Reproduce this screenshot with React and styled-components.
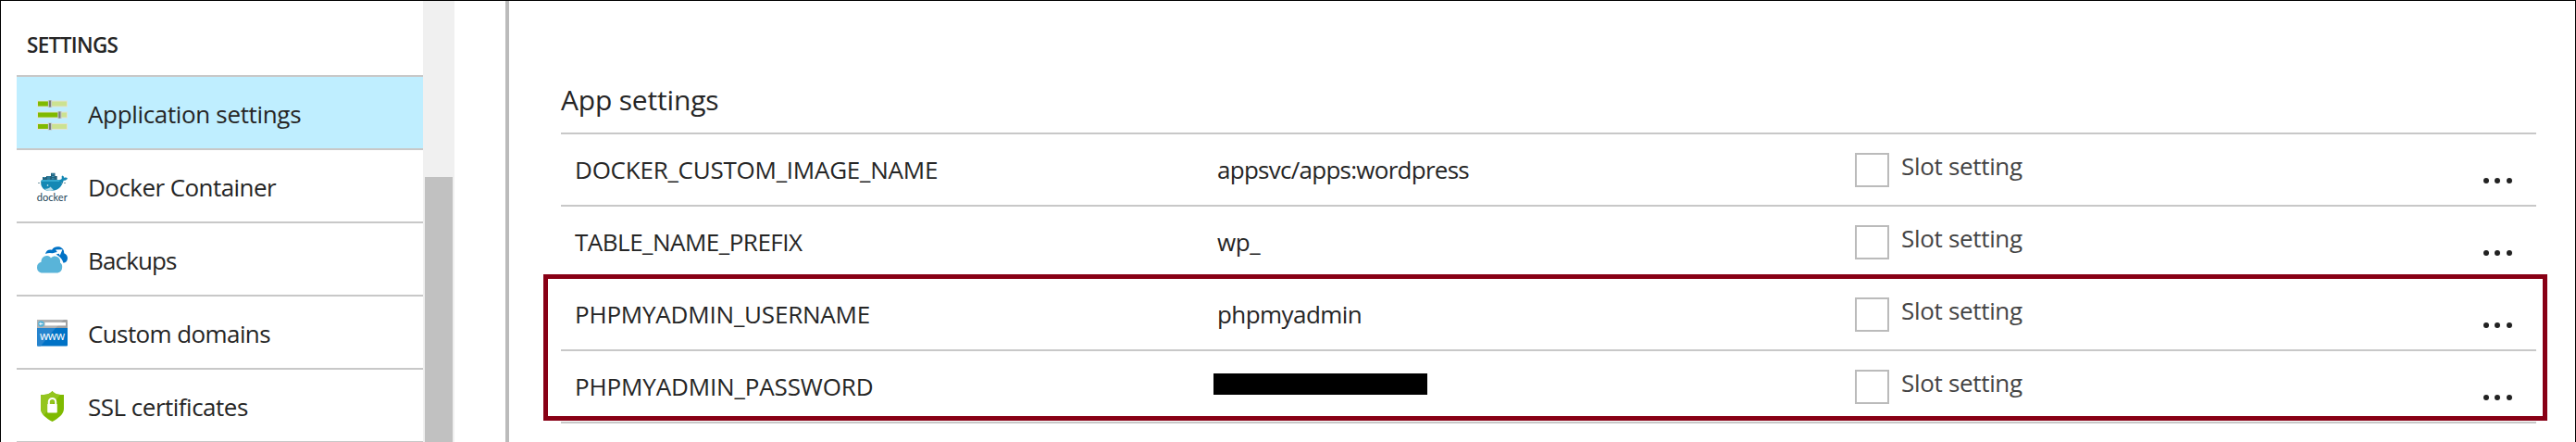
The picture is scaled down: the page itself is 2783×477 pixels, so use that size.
import React from "react";
import styled, { createGlobalStyle } from "styled-components";

const GlobalStyle = createGlobalStyle`
  *, *::before, *::after { box-sizing: border-box; }
  body {
    margin: 0;
    background: #fff;
    color: #252525;
    font-family: "Open Sans", "Noto Sans", sans-serif;
    font-size: 26px;
    overflow: hidden;
  }
`;

const Frame = styled.div`
  position: relative;
  display: flex;
  width: 2783px;
  height: 477px;
  overflow: hidden;
  border: 1px solid #000;
  border-bottom: 0;
`;

const Sidebar = styled.nav`
  width: 456px;
  padding-left: 17px;
  flex: none;
`;

const SidebarHeading = styled.h2`
  margin: 0;
  height: 82px;
  padding: 32px 0 0 11px;
  border-bottom: 2px solid #c8c8c8;
  font-size: 22.5px;
  font-weight: 600;
  line-height: 32px;
  letter-spacing: -0.65px;
`;

const MenuItem = styled.div`
  display: flex;
  height: 79px;
  padding-left: 22px;
  border-bottom: 2px solid #c8c8c8;
  background: ${(p) => (p.$active ? "#bfeeff" : "transparent")};
`;

const MenuIcon = styled.svg`
  flex: none;
  width: 33px;
  height: 35px;
  margin-top: 24px;
  overflow: visible;
`;

const MenuLabel = styled.span`
  margin: 3px 0 0 22px;
  line-height: 74px;
  white-space: nowrap;
  letter-spacing: ${(p) => p.$spacing}px;
`;

const ScrollTrack = styled.div`
  flex: none;
  width: 34px;
  height: 476px;
  padding: 190px 2px 0;
  background: #f0f0f0;
`;

const ScrollThumb = styled.div`
  height: 286px;
  background: #c1c1c1;
`;

const Blade = styled.main`
  flex: none;
  width: 2194px;
  margin-left: 55px;
  padding: 86px 0 0 56px;
  border-left: 4px solid #bbb;
`;

const SectionTitle = styled.h1`
  margin: 0;
  height: 58px;
  border-bottom: 2px solid #c8c8c8;
  font-size: 30px;
  font-weight: 400;
  line-height: 42px;
  letter-spacing: -0.18px;
`;

const SettingRow = styled.div`
  display: grid;
  grid-template-columns: 694px 687px 1fr 72px;
  height: 78px;
  padding-left: 15px;
  border-bottom: 2px solid #c8c8c8;
`;

const Cell = styled.div`
  line-height: 76px;
  white-space: nowrap;
  letter-spacing: ${(p) => p.$spacing}px;
`;

const Redacted = styled.div`
  width: 231px;
  height: 23px;
  margin: 24px 0 0 -4px;
  background: #000;
`;

const SlotSetting = styled.label`
  display: flex;
  gap: 13px;
  color: #444;
  line-height: 69px;
  letter-spacing: -0.32px;
`;

const Checkbox = styled.span`
  width: 37px;
  height: 37px;
  margin: 20px 0 0 2px;
  border: 2px solid #bbb;
`;

const MoreButton = styled.div`
  display: flex;
  gap: 6.6px;
  margin: 47px 0 0 15px;
`;

const Dot = styled.i`
  width: 5.9px;
  height: 6px;
  border-radius: 50%;
  background: #222;
`;

const Highlight = styled.div`
  position: absolute;
  left: 586px;
  top: 295px;
  width: 2165px;
  height: 158px;
  border: 5px solid #880015;
`;

function SlidersIcon() {
  const bars = [[0, 14], [12, 24.4], [24.5, 14]];
  return (
    <MenuIcon viewBox="0 0 33 35">
      {bars.map(([y, knob]) => (
        <g key={y} transform={`translate(0 ${y + 1.5})`}>
          <rect width="33" height="7" fill="#e0e3d6" />
          <rect x="1" y="1" width="31" height="5" fill="#cce291" />
          <rect x="1" y="1" width={knob - 1} height="5" fill="#7fba00" />
          <rect x={knob - 2.1} y="-.5" width="4.2" height="8" fill="#c4c8c8" />
          <rect x={knob - 1} y="0" width="2" height="7" fill="#7a7a7a" />
        </g>
      ))}
    </MenuIcon>
  );
}

function DockerIcon() {
  return (
    <MenuIcon viewBox="0 0 33 35">
      <path d="M6 5h4v3H6zM10 4h5v4h-5zM15 .8h4.500V8H15zM19.500 4h2.200v4h-2.200z" fill="#23617c" />
      <path d="M7 5.600h2M11 5h3M11 7h3M16 2h2.500M16 4.500h2.500M16 6.800h2.500" stroke="#3c97b8" strokeWidth="1" />
      <path d="M4 10.500 5 8h19c2.300 0 3.300-.8 2.600-3.400l.6-1c1.700.8 2 1.300 2.100 2.400 1.400-.6 2.500-.5 3.700.2-.7 1.800-2.200 2.500-4.300 2.600C26.500 16.500 22 20 14.500 20 8 20 4.200 17 4 10.500Z" fill="#1488b4" />
      <path d="M5 8h20l-1 2H4.500z" fill="#36a9cf" />
      <path d="M8 17.500c3 .8 5-.2 6.500-1.900l3.500 3.600c-4.500 1.500-8 .7-10-1.700z" fill="#b6dce7" />
      <path d="M1 11.500h4M26 11.500h5" stroke="#769aa7" strokeWidth="1" strokeDasharray="2 1" />
      <circle cx="11.500" cy="14" r=".8" fill="#fff" />
      <text x="-.3" y="31" fontFamily="Lato, sans-serif" fontSize="11.300" fill="#24475a" textLength="33" lengthAdjust="spacingAndGlyphs">docker</text>
    </MenuIcon>
  );
}

function BackupIcon() {
  return (
    <MenuIcon viewBox="0 0 33 35">
      <path d="M9 9C10 5 13 3.800 16 4.700 18 1.400 21 .9 23.500 1.300 27.500 2 29.500 5 29.200 8.200c2.600 1 3.800 3 3.800 5.300 0 3-1.800 5-4.500 5.200C26 11 17 6 9 9z" fill="#0072c6" />
      <path d="M14 11.500c1.500-2.600 4.500-4.300 7.800-4.500L20 4.500l7.500-.2-2.800 6.500-1-2c-2 0-4.300 1.200-5.300 3.700z" fill="#fff" />
      <path d="M6 29.500C2 29.500 0 27 0 23.500c0-3 1.700-5.200 4.500-5.700C4.400 14 7 10.800 11 11c2 .1 3 1 4 2.400 1.500-1.400 3.400-2 5.500-1.700 3.300.5 5 3.300 4.500 6.700 1.500.8 2.200 2.200 2.200 4.300 0 4.300-2.200 6.800-6.200 6.800z" fill="#59b4d9" stroke="#fff" strokeWidth="1.600" paintOrder="stroke" />
    </MenuIcon>
  );
}

function DomainIcon() {
  return (
    <MenuIcon viewBox="0 0 33 35">
      <path d="M0 10h33v18.500a1 1 0 0 1-1 1H1a1 1 0 0 1-1-1z" fill="#0072c6" />
      <path d="M1 1h31a1 1 0 0 1 1 1v8H0V2a1 1 0 0 1 1-1z" fill="#a0a1a2" />
      <path d="M1 1h28l-9 9H0V2z" fill="#b1b2b3" />
      <path d="M0 10h20L4 29.500H1a1 1 0 0 1-1-1z" fill="#2684ce" />
      <rect x="8.500" y="4" width="22.500" height="3.400" fill="#fff" />
      <circle cx="4.400" cy="5.500" r="3.300" fill="#59b4d9" />
      <path d="M6.300 5.500h-3.500m1.500-1.500L2.800 5.500l1.500 1.500" stroke="#fff" strokeWidth=".9" fill="none" />
      <text x="3" y="22.800" fontFamily="Open Sans, sans-serif" fontSize="12" fontWeight="500" fill="#fff" textLength="27" lengthAdjust="spacing">www</text>
    </MenuIcon>
  );
}

function ShieldIcon() {
  return (
    <MenuIcon viewBox="0 0 33 35">
      <path d="M16.500-1c1.500 1.800 3.500 3 5.500 3.400 2.300.5 4.500.6 7 .6v15c0 6-6 10.500-12.500 14C10 28.500 4 24 4 18V3c2.500 0 4.700-.1 7-.6C13 2 15 .8 16.500-1z" fill="#7fba00" />
      <path d="M16.500-1c1.500 1.800 3.500 3 5.500 3.400 1 .2 2 .4 3 .5L7.500 25C5.300 23 4 20.700 4 18V3c2.500 0 4.700-.1 7-.6C13 2 15 .8 16.500-1z" fill="#94c51f" />
      <path d="M12.800 14v-3.400a3.700 3.700 0 0 1 7.400 0V14" fill="none" stroke="#fff" strokeWidth="2" />
      <rect x="11.200" y="13" width="10.600" height="9.500" rx=".7" fill="#fff" />
    </MenuIcon>
  );
}

const menu = [
  { label: "Application settings", spacing: -0.34, Icon: SlidersIcon, active: true },
  { label: "Docker Container", spacing: -0.56, Icon: DockerIcon },
  { label: "Backups", spacing: -0.85, Icon: BackupIcon },
  { label: "Custom domains", spacing: -0.6, Icon: DomainIcon },
  { label: "SSL certificates", spacing: -0.5, Icon: ShieldIcon },
];

const settings = [
  { name: "DOCKER_CUSTOM_IMAGE_NAME", nameSpacing: -0.24, value: "appsvc/apps:wordpress", valueSpacing: -0.73 },
  { name: "TABLE_NAME_PREFIX", nameSpacing: -0.5, value: "wp_", valueSpacing: -0.4 },
  { name: "PHPMYADMIN_USERNAME", nameSpacing: -0.2, value: "phpmyadmin", valueSpacing: -0.57 },
  { name: "PHPMYADMIN_PASSWORD", nameSpacing: -0.14, value: null },
];

export default function App() {
  return (
    <>
      <GlobalStyle />
      <Frame>
        <Sidebar>
          <SidebarHeading>SETTINGS</SidebarHeading>
          {menu.map(({ label, spacing, Icon, active }) => (
            <MenuItem key={label} $active={active}>
              <Icon />
              <MenuLabel $spacing={spacing}>{label}</MenuLabel>
            </MenuItem>
          ))}
        </Sidebar>
        <ScrollTrack>
          <ScrollThumb />
        </ScrollTrack>
        <Blade>
          <SectionTitle>App settings</SectionTitle>
          {settings.map((s) => (
            <SettingRow key={s.name}>
              <Cell $spacing={s.nameSpacing}>{s.name}</Cell>
              {s.value ? <Cell $spacing={s.valueSpacing}>{s.value}</Cell> : <Redacted />}
              <SlotSetting>
                <Checkbox />
                Slot setting
              </SlotSetting>
              <MoreButton>
                <Dot />
                <Dot />
                <Dot />
              </MoreButton>
            </SettingRow>
          ))}
        </Blade>
        <Highlight />
      </Frame>
    </>
  );
}
